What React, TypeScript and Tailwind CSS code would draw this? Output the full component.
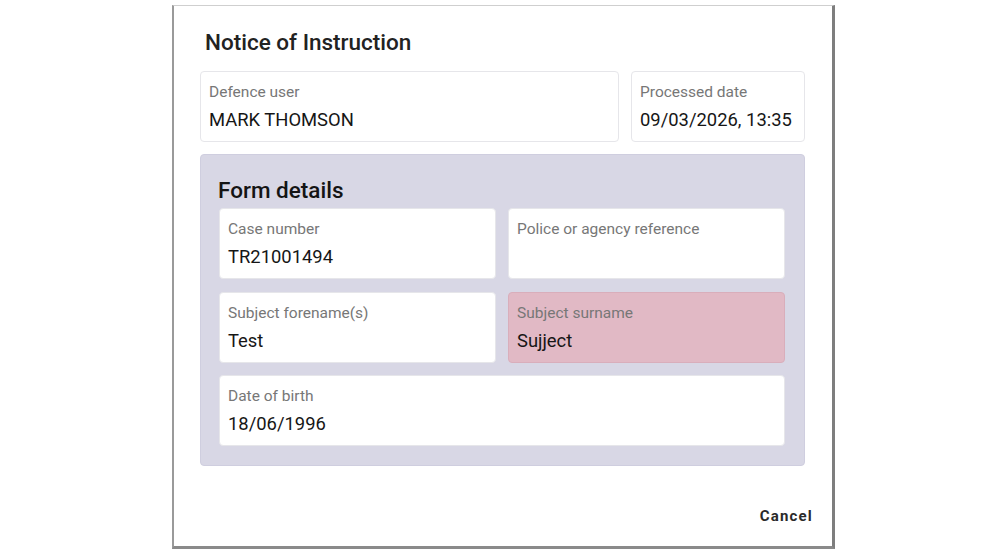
import React from "react";

type Field = {
  label: string;
  value?: string;
  tone?: "plain" | "warn";
  span?: boolean;
};

const fields: Field[] = [
  { label: "Case number", value: "TR21001494" },
  { label: "Police or agency reference", value: "" },
  { label: "Subject forename(s)", value: "Test" },
  { label: "Subject surname", value: "Sujject", tone: "warn" },
  { label: "Date of birth", value: "18/06/1996", span: true },
];

function InfoBox({ label, value, tone = "plain", className = "" }: Field & { className?: string }) {
  const toneClass =
    tone === "warn"
      ? "border-[#d9aebb] bg-[#e1b9c5]"
      : "border-[#e6e6ea] bg-white";
  return (
    <div className={`box-border h-[71px] rounded-[4px] border px-[8px] pt-[10px] ${toneClass} ${className}`}>
      <div className="text-[15.5px] leading-[20px] text-[#777]">{label}</div>
      <div className="mt-[6px] text-[18.4px] leading-[24px] text-[#161616]">{value || "\u00a0"}</div>
    </div>
  );
}

export default function App() {
  return (
    <div
      className="min-h-[560px] w-[1000px] bg-white pl-[172px] pt-[5px]"
      style={{ fontFamily: "Roboto, 'Liberation Sans', sans-serif" }}
    >
      <div className="box-border flex h-[544px] w-[663px] flex-col border-b-[3px] border-l-2 border-r-[3px] border-t border-b-[#8a8a8a] border-l-[#9a9a9a] border-r-[#7e7e7e] border-t-[#cfcfcf] bg-white pl-[26px] pr-[27px]">
        <h1 className="mt-[22px] pl-[5px] text-[22.5px] font-medium leading-[28px] text-[#222]">
          Notice of Instruction
        </h1>

        <div className="mt-[15px] flex gap-[12px]">
          <InfoBox label="Defence user" value="MARK THOMSON" className="w-[419px]" />
          <InfoBox label="Processed date" value="09/03/2026, 13:35" className="flex-1" />
        </div>

        <section className="mt-[12px] rounded-[4px] border border-[#cfcedf] bg-[#d8d7e5] pb-[19px] pl-[18px] pr-[19px] pt-[21px]">
          <h2 className="-ml-px text-[22.5px] font-medium leading-[28px] text-[#141414]">Form details</h2>
          <div className="mt-[4px] grid grid-cols-2 gap-x-[12px] gap-y-[12.5px]">
            {fields.map((f) => (
              <InfoBox key={f.label} {...f} className={f.span ? "col-span-2" : ""} />
            ))}
          </div>
        </section>

        <div className="mt-auto flex justify-end pb-[20px]">
          <button
            type="button"
            className="mr-[-8px] text-[15px] font-bold leading-[20px] tracking-[1.2px] text-[#2a2a2a]"
          >
            Cancel
          </button>
        </div>
      </div>
    </div>
  );
}
